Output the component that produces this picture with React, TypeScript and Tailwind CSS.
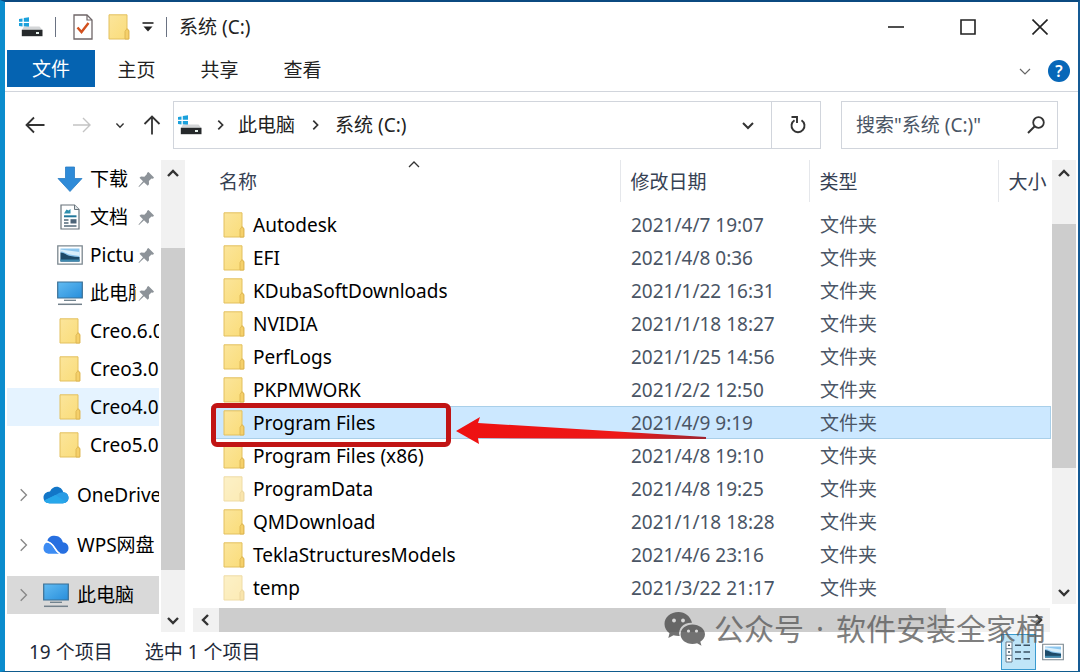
import React from "react";

function FolderIcon({ faded = false }: { faded?: boolean }) {
  return (
    <svg width="22" height="26" viewBox="0 0 22 26" className={faded ? "shrink-0 opacity-55" : "shrink-0"} aria-hidden="true">
      <defs>
        <linearGradient id="folderFill" x1="0" y1="0" x2="1" y2="1">
          <stop offset="0" stopColor="#fbe59b" />
          <stop offset="1" stopColor="#fadc78" />
        </linearGradient>
      </defs>
      <path d="M1 .8h18v13.700l1.800 2V25H1z" fill="url(#folderFill)" stroke="#e3c05f" strokeWidth="1" />
      <path d="M17 25v-7.500l2-3 1.800 2.500V25z" fill="#f5d06a" stroke="#dcb450" strokeWidth=".9" />
    </svg>
  );
}

function DriveIcon() {
  return (
    <svg width="24" height="20" viewBox="0 0 24 20" className="shrink-0" aria-hidden="true">
      <path d="M0 2l3.500-.6v3.400H0zM4.800 1.100L10 .3v4.500H4.800zM0 6h3.500v3.400L0 8.900zM4.800 6H10v4.200l-5.200-.7z" fill="#1ba1dc" />
      <path d="M5 9.500h15.500L23.500 13H2.800z" fill="#d4d6d8" />
      <path d="M2.800 12.800h20.700v6.400H2.800z" fill="#26292b" />
      <path d="M17 15h3v2h-3z" fill="#e8f4ee" />
    </svg>
  );
}

function MonitorIcon() {
  return (
    <svg width="26" height="26" viewBox="0 0 26 26" className="shrink-0" aria-hidden="true">
      <defs>
        <linearGradient id="screenFill" x1="0" y1="0" x2="1" y2="1">
          <stop offset="0" stopColor="#62bbf2" />
          <stop offset="1" stopColor="#278edb" />
        </linearGradient>
      </defs>
      <path d="M.7 2h24.600v16H.7z" fill="url(#screenFill)" stroke="#3b6f94" strokeWidth="1.200" />
      <path d="M7 20.300h12" stroke="#6d7f8b" strokeWidth="1.300" />
      <path d="M1 24.300h24" stroke="#73818b" strokeWidth="1.500" />
    </svg>
  );
}

function DownloadIcon() {
  return (
    <svg width="26" height="26" viewBox="0 0 26 26" className="shrink-0" aria-hidden="true">
      <path d="M8.500 1h9v11.500H25L13 25.500 1 12.500h7.500z" fill="#2f8bd8" stroke="#277cc5" strokeWidth=".8" />
    </svg>
  );
}

function DocumentIcon() {
  return (
    <svg width="26" height="26" viewBox="0 0 26 26" className="shrink-0" aria-hidden="true">
      <path d="M4 1h13.500L22 5.500V25H4z" fill="#fff" stroke="#68737b" strokeWidth="1.200" />
      <path d="M17.500 1v4.500H22" fill="#dfe5e9" stroke="#68737b" />
      <path d="M7 9.500l2.500-4 2 1 2-1.500v4.500z" fill="#2f8fae" />
      <path d="M7 12.300h12.500" stroke="#20779a" strokeWidth="2" />
      <path d="M7 16h4.500M7 19h4.500M7 22h12.500" stroke="#536a7a" strokeWidth="1.300" />
      <path d="M13.500 15.200h6v4.300h-6z" fill="#4d6478" />
    </svg>
  );
}

function PictureIcon({ small = false }: { small?: boolean }) {
  return (
    <svg width={small ? 22 : 26} height={small ? 18 : 20} viewBox="0 0 26 20" className="shrink-0" aria-hidden="true">
      <path d="M.8.8h24.400v18.400H.8z" fill="#fff" stroke="#7b878f" strokeWidth="1.300" />
      <path d="M3.500 3.500h19v13h-19z" fill="#8cc6ee" />
      <path d="M3.500 6.500c4 0 5 2 9 3l10 1.500v-4L3.500 4.500z" fill="#d9effb" />
      <path d="M3.500 7.500c4 0 6 3 10 3.500 3 .5 6 1 9 1v4.500h-19z" fill="#1d4a68" />
      <path d="M3.500 14.500h19v2h-19z" fill="#3f89ae" />
    </svg>
  );
}

function CloudIcon() {
  return (
    <svg width="26" height="18" viewBox="0 0 26 18" className="shrink-0" aria-hidden="true">
      <path d="M7 5.500C8.500 2.300 11 .8 13.500.8c3.500 0 6 2.400 6.700 5.500 3.200.3 5.300 2.500 5.300 5.500 0 3.400-2.500 5.400-5.500 5.400H6.500C3 17.200.5 15 .5 11.500.5 8.300 3 5.700 7 5.500z" fill="#1276c8" />
      <path d="M20.200 6.300c3.200.3 5.300 2.500 5.300 5.500 0 3.400-2.500 5.400-5.500 5.400H6.500c-2.400 0-4.300-1-5.300-2.700L14 8.300c1.600-1.400 4-2.200 6.200-2z" fill="#299ce5" />
      <path d="M1.200 14.500L12.500 9l10.700 7.100c-1 .7-2 1.100-3.200 1.100H6.500c-2.400 0-4.300-1-5.300-2.700z" fill="#27a7ea" />
    </svg>
  );
}

function WpsIcon() {
  return (
    <svg width="26" height="20" viewBox="0 0 26 20" className="shrink-0" aria-hidden="true">
      <path d="M4.500 6C4.800 2.800 7.500.8 11.500.8c4.500 0 7.600 2.900 8.300 6.400 3.300.2 5.700 2.500 5.700 5.700 0 3.500-2.600 5.800-6 5.800-4.500 0-6-3.700-8.500-7.400C9 8.500 7.200 6.500 4.500 6z" fill="#276fe0" />
      <path d="M4 7.300c4 .4 5.200 3 7.200 6.300 1.300 2.200 2.600 4.300 5 5.100H6.500C3 18.700.5 16.500.5 13.200c0-2.700 1.300-4.800 3.500-5.900z" fill="#3d8cf3" />
      <path d="M3.300 7c4.500-.3 6.500 2.700 8.600 6.200 1.300 2.200 2.600 4.300 5 5.500" fill="none" stroke="#fff" strokeWidth="1.500" />
    </svg>
  );
}

function PinIcon() {
  return (
    <svg width="17" height="17" viewBox="0 0 17 17" className="shrink-0" aria-hidden="true">
      <path d="M10.500 1L16 6.500l-1 1.200-1.500-.3-2.600 2.600.1 3.300-1.300 1.500L6 11.300 1 16l-.5-.5L5 10.300 1.500 6.800l1.500-1.300 3.400.2L9 3.100l-.1-1.200z" fill="#8d9399" />
    </svg>
  );
}

type Dir = "up" | "down" | "left" | "right";
const chevrons: Record<Dir, string> = {
  up: "M2 9l5-5 5 5",
  down: "M2 5l5 5 5-5",
  left: "M9 2L4 7l5 5",
  right: "M5 2l5 5-5 5",
};

function Chevron({ dir, size = 14, color = "#333", weight = 1.6 }: { dir: Dir; size?: number; color?: string; weight?: number }) {
  return (
    <svg width={size} height={size} viewBox="0 0 14 14" className="shrink-0" aria-hidden="true">
      <path d={chevrons[dir]} fill="none" stroke={color} strokeWidth={weight} />
    </svg>
  );
}

const quickAccess = [
  { label: "下载", icon: <DownloadIcon />, pinned: true },
  { label: "文档", icon: <DocumentIcon />, pinned: true },
  { label: "Pictu", icon: <PictureIcon />, pinned: true },
  { label: "此电脑", icon: <MonitorIcon />, pinned: true },
  { label: "Creo.6.0", icon: <FolderIcon />, pinned: false },
  { label: "Creo3.0", icon: <FolderIcon />, pinned: false },
  { label: "Creo4.0", icon: <FolderIcon />, pinned: false, hovered: true },
  { label: "Creo5.0", icon: <FolderIcon />, pinned: false },
];

const roots = [
  { label: "OneDrive", icon: <CloudIcon />, current: false },
  { label: "WPS网盘", icon: <WpsIcon />, current: false },
  { label: "此电脑", icon: <MonitorIcon />, current: true },
];

const files = [
  { name: "Autodesk", date: "2021/4/7 19:07" },
  { name: "EFI", date: "2021/4/8 0:36" },
  { name: "KDubaSoftDownloads", date: "2021/1/22 16:31" },
  { name: "NVIDIA", date: "2021/1/18 18:27" },
  { name: "PerfLogs", date: "2021/1/25 14:56" },
  { name: "PKPMWORK", date: "2021/2/2 12:50" },
  { name: "Program Files", date: "2021/4/9 9:19", selected: true },
  { name: "Program Files (x86)", date: "2021/4/8 19:10" },
  { name: "ProgramData", date: "2021/4/8 19:25", faded: true },
  { name: "QMDownload", date: "2021/1/18 18:28" },
  { name: "TeklaStructuresModels", date: "2021/4/6 23:16" },
  { name: "temp", date: "2021/3/22 21:17", faded: true },
];

function TitleBar() {
  return (
    <header className="flex h-12 items-center pt-px pl-3.5">
      <DriveIcon />
      <span className="ml-3 h-5 w-px bg-gray-500" />
      <button aria-label="属性" className="ml-4">
        <svg width="22" height="26" viewBox="0 0 22 26" aria-hidden="true">
          <path d="M2 1h13l5 5v19H2z" fill="#fff" stroke="#6f6668" strokeWidth="1.300" />
          <path d="M15 1v5h5" fill="none" stroke="#6f6668" strokeWidth="1.200" />
          <path d="M5.500 13.500l4 4.500 7-9" fill="none" stroke="#d2501e" strokeWidth="2.400" />
        </svg>
      </button>
      <button aria-label="新建文件夹" className="ml-3.5"><FolderIcon /></button>
      <button aria-label="自定义快速访问工具栏" className="ml-3">
        <svg width="12" height="12" viewBox="0 0 12 12" aria-hidden="true">
          <path d="M.5 2h11" stroke="#222" strokeWidth="1.600" />
          <path d="M1.500 5.500h9L6 10.500z" fill="#222" />
        </svg>
      </button>
      <span className="ml-3 h-5 w-px bg-gray-500" />
      <h1 className="ml-3 flex-1">系统 (C:)</h1>
      <div className="flex items-center gap-14 pr-[30px]">
        <button aria-label="最小化">
          <svg width="16" height="16" viewBox="0 0 16 16" aria-hidden="true"><path d="M0 8h16" stroke="#222" strokeWidth="1.600" /></svg>
        </button>
        <button aria-label="最大化">
          <svg width="16" height="16" viewBox="0 0 16 16" aria-hidden="true"><path d="M1 1h14v14H1z" fill="none" stroke="#222" strokeWidth="1.600" /></svg>
        </button>
        <button aria-label="关闭">
          <svg width="16" height="16" viewBox="0 0 16 16" aria-hidden="true"><path d="M.5.500l15 15M15.500.500l-15 15" stroke="#222" strokeWidth="1.600" /></svg>
        </button>
      </div>
    </header>
  );
}

function Ribbon() {
  return (
    <nav className="flex h-[42px] items-start border-b border-gray-300 pl-0.5">
      <button className="h-[37px] w-[88px] bg-[#0563b1] text-white">文件</button>
      <button className="h-[39px] w-[83px]">主页</button>
      <button className="h-[39px] w-[83px]">共享</button>
      <button className="h-[39px] w-[83px]">查看</button>
      <div className="ml-auto flex h-[41px] items-center gap-4 pr-2">
        <button aria-label="展开功能区"><Chevron dir="down" color="#666" weight={1.2} /></button>
        <button aria-label="帮助" className="flex size-[22px] items-center justify-center rounded-full bg-[#0767b8] text-base font-semibold text-white">?</button>
      </div>
    </nav>
  );
}

function AddressRow() {
  return (
    <div className="flex h-[66px] items-center px-5">
      <button aria-label="返回">
        <svg width="20" height="20" viewBox="0 0 20 20" aria-hidden="true"><path d="M19.500 10H1.500M9 2.500L1.500 10 9 17.500" fill="none" stroke="#333" strokeWidth="1.800" /></svg>
      </button>
      <button aria-label="前进" className="ml-7">
        <svg width="18" height="20" viewBox="0 0 18 20" aria-hidden="true"><path d="M0 10h17M10 3l7 7-7 7" fill="none" stroke="#c4c4c4" strokeWidth="1.400" /></svg>
      </button>
      <button aria-label="最近浏览的位置" className="ml-6"><Chevron dir="down" size={10} weight={2} /></button>
      <button aria-label="上移" className="ml-[18px]">
        <svg width="18" height="20" viewBox="0 0 18 20" aria-hidden="true"><path d="M9 19.500V1.500M1.500 9L9 1.500 16.500 9" fill="none" stroke="#333" strokeWidth="1.800" /></svg>
      </button>
      <div className="ml-3 flex h-12 flex-1 items-center border border-gray-300">
        <span className="ml-1"><DriveIcon /></span>
        <span className="ml-3"><Chevron dir="right" size={12} weight={2} /></span>
        <button className="ml-3">此电脑</button>
        <span className="ml-3.5"><Chevron dir="right" size={12} weight={2} /></span>
        <button className="ml-3.5">系统 (C:)</button>
        <button aria-label="以前的位置" className="mr-4 ml-auto"><Chevron dir="down" weight={2} /></button>
        <button aria-label="刷新" className="flex h-full w-[49px] items-center justify-center border-l border-gray-300 pl-1">
          <svg width="18" height="20" viewBox="0 0 18 20" aria-hidden="true">
            <path d="M12.500 5.200A6.500 6.500 0 1 1 5.500 5.200" fill="none" stroke="#333" strokeWidth="1.900" />
            <path d="M2.500 2H8v6" fill="none" stroke="#333" strokeWidth="1.900" />
          </svg>
        </button>
      </div>
      <label className="ml-5 flex h-12 w-[217px] items-center border border-gray-300 pr-3 pl-3.5">
        <input type="search" aria-label="搜索" placeholder={'搜索"系统 (C:)"'} className="min-w-0 flex-1 outline-none placeholder:text-gray-600" />
        <svg width="18" height="18" viewBox="0 0 18 18" aria-hidden="true">
          <circle cx="11.500" cy="6.500" r="5.300" fill="none" stroke="#333" strokeWidth="1.800" />
          <path d="M7.500 10.500L1 17" stroke="#333" strokeWidth="2" />
        </svg>
      </label>
    </div>
  );
}

function Sidebar() {
  return (
    <aside className="flex w-[180px] shrink-0">
      <ul className="mr-0.5 ml-0.5 w-[152px] overflow-hidden whitespace-nowrap text-black">
        {quickAccess.map((item) => (
          <li key={item.label}>
            <a href="#" className={item.hovered ? "flex h-[38px] items-center bg-[#e5f3ff] pl-[49px]" : "flex h-[38px] items-center pl-[49px]"}>
              <span className="flex w-7 shrink-0 justify-center">{item.icon}</span>
              <span className={item.pinned ? "ml-1.5 w-[46px] shrink-0 overflow-hidden" : "ml-1.5"}>{item.label}</span>
              {item.pinned && <span className="ml-0.5"><PinIcon /></span>}
            </a>
          </li>
        ))}
        {roots.map((item) => (
          <li key={item.label} className="mt-3">
            <a href="#" className={item.current ? "flex h-[38px] items-center bg-[#d9d9d9] pl-2" : "flex h-[38px] items-center pl-2"}>
              <Chevron dir="right" size={16} color="#888" weight={1.2} />
              <span className="ml-3">{item.icon}</span>
              <span className="ml-2">{item.label}</span>
            </a>
          </li>
        ))}
      </ul>
      <div className="flex w-6 flex-col items-center bg-[#f1f1f1]">
        <button aria-label="向上滚动" className="flex h-[28px] items-center"><Chevron dir="up" weight={2.4} /></button>
        <div className="flex w-full flex-1 flex-col pt-[60px] pb-[38px]"><div className="flex-1 bg-[#cdcdcd]" /></div>
        <button aria-label="向下滚动" className="flex h-6 items-center"><Chevron dir="down" weight={2.4} /></button>
      </div>
    </aside>
  );
}

function FileTable() {
  return (
    <table className="w-full table-fixed text-left whitespace-nowrap">
      <colgroup>
        <col />
        <col className="w-[189px]" />
        <col className="w-[189px]" />
        <col className="w-[53px]" />
      </colgroup>
      <thead>
        <tr className="h-[42px] text-gray-700">
          <th className="relative p-0 pt-0.5 pl-2 font-normal">
            名称
            <span className="absolute -top-0.5 left-1/2 -ml-2"><Chevron dir="up" weight={1.3} /></span>
          </th>
          <th className="border-l border-gray-200 p-0 pt-0.5 pl-2.5 font-normal">修改日期</th>
          <th className="border-l border-gray-200 p-0 pt-0.5 pl-2.5 font-normal">类型</th>
          <th className="border-l border-gray-200 p-0 pt-0.5 pl-2.5 font-normal">大小</th>
        </tr>
        <tr className="h-1.5"><td colSpan={4} className="p-0" /></tr>
      </thead>
      <tbody>
        {files.map((file) => (
          <tr key={file.name} className={file.selected ? "h-[33px] bg-[#cce8ff] outline outline-1 -outline-offset-1 outline-[#a9cfe9]" : "h-[33px]"}>
            <td className="relative p-0 pl-3">
              <span className="flex items-center gap-2 leading-[26px] text-black">
                <FolderIcon faded={file.faded} />
                {file.name}
              </span>
              {file.selected && (
                <>
                  <span className="absolute -top-[3px] left-0 z-10 h-11 w-[240px] rounded-md border-[5px] border-[#c11414]" />
                  <svg width="252" height="30" viewBox="0 0 252 30" className="absolute top-[9px] left-[245px] z-10" aria-hidden="true">
                    <defs>
                      <linearGradient id="arrowFill" x1="0" y1="0" x2="1" y2="0">
                        <stop offset="0" stopColor="#ee1111" />
                        <stop offset=".65" stopColor="#ee1818" />
                        <stop offset="1" stopColor="#9d2430" />
                      </linearGradient>
                    </defs>
                    <path d="M0 16L24 2l-2 6 228 14v2L22 23l1 6z" fill="url(#arrowFill)" />
                  </svg>
                </>
              )}
            </td>
            <td className="p-0 pl-[11px] text-gray-600">{file.date}</td>
            <td className="p-0 pl-[11px] text-gray-600">文件夹</td>
            <td className="p-0" />
          </tr>
        ))}
      </tbody>
    </table>
  );
}

function Watermark() {
  return (
    <div className="pointer-events-none absolute right-8 bottom-[22px] flex items-center gap-2 text-[30px] leading-10 whitespace-nowrap text-[#555] opacity-75">
      <svg width="42" height="34" viewBox="0 0 42 34" aria-hidden="true">
        <path d="M14.500 0C6.500 0 .5 5.200.5 12c0 3.900 2 7.100 5 9.300L4.300 26l5.200-2.800c2 .6 4 .9 6.200.8-2.200-7 3.500-13.500 12.300-13.200C26.500 4.500 21 0 14.500 0z" fill="#444" />
        <path d="M28.500 12.500c-6.600 0-12 4.300-12 9.800s5.400 9.700 12 9.700c1.600 0 3.200-.2 4.600-.7l4.400 2.400-1.200-4c2.700-1.800 4.700-4.400 4.700-7.400 0-5.500-5.900-9.800-12.500-9.800z" fill="#444" />
        <g fill="#ddd"><circle cx="10" cy="8.500" r="1.900" /><circle cx="19" cy="8.500" r="1.900" /><circle cx="24.500" cy="19" r="1.600" /><circle cx="32.500" cy="19" r="1.600" /></g>
      </svg>
      <span className="flex gap-3">
        <span>公众号</span>
        <span>·</span>
        <span>软件安装全家桶</span>
      </span>
    </div>
  );
}

export default function App() {
  return (
    <div className="relative flex min-h-screen flex-col border-t-2 border-r-2 border-b border-l-[5px] border-t-[#0b4a80] border-r-[#155a94] border-b-[#0f5b8d] border-l-[#0b8ccd] bg-white font-['Noto_Sans','Noto_Sans_CJK_SC',sans-serif] text-[19px] leading-7 text-[#222]">
      <TitleBar />
      <Ribbon />
      <AddressRow />
      <main className="flex flex-1 pt-0.5">
        <Sidebar />
        <section className="flex min-w-0 flex-1 flex-col pl-2">
          <div className="flex flex-1">
            <div className="min-w-0 flex-1 pr-px pl-[18px]"><FileTable /></div>
            <div className="mr-0.5 mb-1 flex w-6 flex-col items-center bg-[#f1f1f1]">
              <button aria-label="向上滚动" className="flex h-[28px] items-center"><Chevron dir="up" weight={2.4} /></button>
              <div className="flex w-full flex-1 flex-col pt-9 pb-[112px]"><div className="flex-1 bg-[#cdcdcd]" /></div>
              <button aria-label="向下滚动" className="flex h-6 items-center"><Chevron dir="down" weight={2.4} /></button>
            </div>
          </div>
          <div className="mr-7 flex h-6 items-center bg-[#f1f1f1]">
            <button aria-label="向左滚动" className="flex w-[26px] justify-center"><Chevron dir="left" weight={2.4} /></button>
            <div className="mr-20 h-full flex-1 bg-[#cdcdcd]" />
            <button aria-label="向右滚动" className="flex w-6 justify-center"><Chevron dir="right" weight={2.4} /></button>
          </div>
        </section>
      </main>
      <footer className="flex h-[39px] items-center gap-8 pr-3.5 pl-6 text-gray-800">
        <span>19 个项目</span>
        <span className="flex-1">选中 1 个项目</span>
        <div className="flex items-center gap-1.5">
          <button aria-label="详细信息" className="flex h-9 w-[35px] items-center justify-center border border-[#3a9bd0] bg-[#bfe5f8]">
            <svg width="27" height="22" viewBox="0 0 27 22" aria-hidden="true">
              <path d="M1 1h6v20H1zM1 7.700h6M1 14.300h6" fill="#fff" stroke="#667887" />
              <path d="M3 4.300h2M3 11h2M3 17.700h2M10 4.300h6M18.500 4.300H25M10 11h6M18.500 11H25M10 17.700h6M18.500 17.700H25" stroke="#3b5263" strokeWidth="1.600" />
            </svg>
          </button>
          <button aria-label="大缩略图"><PictureIcon small /></button>
        </div>
      </footer>
      <Watermark />
    </div>
  );
}
